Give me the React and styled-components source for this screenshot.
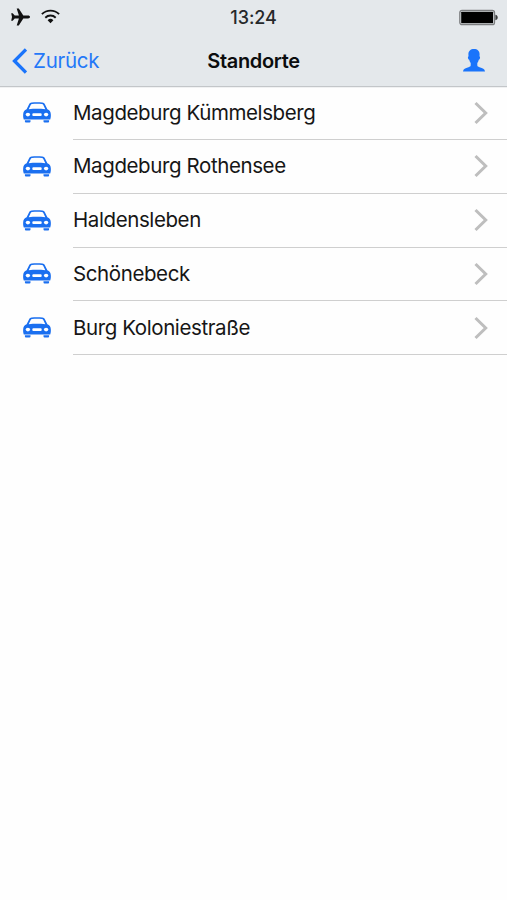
import React from 'react';
import styled, { createGlobalStyle } from 'styled-components';

const GlobalStyle = createGlobalStyle`
  * {
    box-sizing: border-box;
  }

  body {
    margin: 0;
    background-color: #fefefe;
    font-family: Inter, 'Liberation Sans', sans-serif;
    color: #161616;
    -webkit-font-smoothing: antialiased;
  }
`;

const Screen = styled.div`
  width: 100%;
  min-height: 100vh;
  background-color: #fefefe;
`;

const Header = styled.header`
  position: relative;
  height: 86.25px;
  background-color: #e4e8eb;
  box-shadow: 0 1px 0 #c3c6c9, 0 2px 0 #f0f1f2;
`;

const HeaderGrid = styled.div`
  display: grid;
  grid-template-columns: 1fr auto 1fr;
  align-items: center;
`;

const StatusBar = styled(HeaderGrid)`
  height: 35px;
  padding: 0 9px;
`;

const StatusIcons = styled.div`
  display: flex;
  align-items: center;
  gap: 11px;
  padding: 0 0 2px 2px;
`;

const Clock = styled.span`
  font-size: 18px;
  font-weight: 500;
  line-height: 22px;
  letter-spacing: -0.1px;
  color: #26282a;
`;

const Battery = styled.svg`
  justify-self: end;
`;

const NavBar = styled(HeaderGrid)`
  height: 51px;
  padding: 0 12px;
`;

const BackButton = styled.button`
  display: flex;
  align-items: center;
  justify-self: start;
  gap: 6px;
  padding: 0;
  border: 0;
  background: none;
  font-family: inherit;
  font-size: 20.5px;
  line-height: 26px;
  letter-spacing: -0.25px;
  color: #2478f8;
`;

const Title = styled.h1`
  margin: 0;
  font-size: 20px;
  font-weight: 600;
  line-height: 26px;
  letter-spacing: -0.35px;
  color: #0c0d0e;
`;

const ProfileButton = styled.button`
  display: flex;
  justify-self: end;
  padding: 0 10px 0 0;
  border: 0;
  background: none;
  color: #1a74fb;
`;

const LocationList = styled.ul`
  margin: 0;
  padding: 0;
  list-style: none;
`;

const LocationItem = styled.li`
  display: flex;
  align-items: center;
  height: 53.75px;
  padding-left: 23px;
  color: #1a6ff0;
`;

const LocationBody = styled.div`
  display: flex;
  flex: 1;
  align-items: center;
  justify-content: space-between;
  height: 100%;
  margin-left: 22px;
  padding-right: 19px;
  border-bottom: 1px solid #cfcfcf;
`;

const LocationName = styled.span`
  font-size: 20.5px;
  line-height: 26px;
  letter-spacing: -0.4px;
  color: #161616;
`;

const locations = [
  'Magdeburg Kümmelsberg',
  'Magdeburg Rothensee',
  'Haldensleben',
  'Schönebeck',
  'Burg Koloniestraße',
];

const PlaneIcon = () => (
  <svg width="19" height="18" viewBox="0 0 19 18" fill="#111">
    <path d="M19 9c0 .8-.8 1.4-1.9 1.4h-4.800L7.800 17.400H5.700l2.200-7H3.700l-2 2.400H.2L1 9 .2 5.200h1.500l2 2.400h4.200L5.700.6h2.100l4.500 7h4.800c1.100 0 1.900.6 1.900 1.400z" />
  </svg>
);

const WifiIcon = () => (
  <svg width="19" height="15" viewBox="0 0 19 15" fill="none" stroke="#111" strokeWidth="1.9">
    <path d="M.9 5.200a12.200 12.200 0 0 1 17.200 0" />
    <path d="M4.300 8.700a7.400 7.400 0 0 1 10.400 0" />
    <path d="M9.500 14.200 6.600 11.300a4.100 4.100 0 0 1 5.800 0z" fill="#111" stroke="none" />
  </svg>
);

const BatteryIcon = () => (
  <Battery width="39" height="17" viewBox="0 0 39 17">
    <rect x=".8" y="1.300" width="34.700" height="14.400" rx="2.200" fill="none" stroke="#7c7e80" strokeWidth="1.300" />
    <rect x="2.200" y="2.700" width="31.900" height="11.600" rx=".6" fill="#000" />
    <path d="M36.400 5.800c1.500.3 2.300 1.400 2.300 2.700s-.8 2.400-2.300 2.700z" fill="#3c3d3e" />
  </Battery>
);

const BackIcon = () => (
  <svg width="15" height="26" viewBox="0 0 15 26" fill="none" stroke="#1a74fb" strokeWidth="3.300">
    <path d="M14 1.500 2.500 13 14 24.500" />
  </svg>
);

const PersonIcon = () => (
  <svg width="22" height="23" viewBox="0 0 22 23" fill="currentColor">
    <path d="M11 0c3.500 0 5.600 2 5.600 5.200 0 .8-.1 1.500-.2 2.100.6.200.8.900.6 1.700-.2.900-.6 1.600-1.200 1.800-.4 1.500-.9 2.500-1.500 3.200v2.300c0 1 .8 1.500 2.200 1.900 3.200.9 5.200 1.600 5.500 4.300H0c.3-2.700 2.300-3.400 5.500-4.300 1.400-.4 2.200-.9 2.200-1.900V14c-.6-.7-1.100-1.700-1.500-3.200-.6-.2-1-.9-1.200-1.800-.2-.8 0-1.500.6-1.700-.1-.6-.2-1.300-.2-2.100C5.400 2 7.500 0 11 0z" />
  </svg>
);

const CarIcon = () => (
  <svg width="28" height="22" viewBox="0 0 28 22">
    <path
      fill="currentColor"
      fillRule="evenodd"
      d="M8.600.5C11.800 0 16.200 0 19.400.5c1.200.2 2 .7 2.500 1.700l2.500 5.100c2.100.8 3.200 2.300 3.400 4.600.2 2.200 0 4-.6 5.500H.8c-.6-1.500-.8-3.300-.6-5.500.2-2.300 1.300-3.800 3.400-4.600l2.500-5.100C6.600 1.200 7.400.7 8.600.5zM7.700 2.900 5.700 7.200c5.500-.6 11.100-.6 16.600 0l-2-4.300c-.3-.6-.7-.8-1.400-.9-3.200-.4-6.600-.4-9.800 0-.7.1-1.100.3-1.400.9z"
    />
    <path fill="currentColor" d="M1.900 18.200h5.600v1.200q0 1-1 1H2.900q-1 0-1-1zM20.500 18.200h5.600v1.200q0 1-1 1h-3.600q-1 0-1-1z" />
    <g fill="#fff">
      <ellipse cx="4.900" cy="12.600" rx="2.200" ry="1.800" />
      <ellipse cx="23.100" cy="12.600" rx="2.200" ry="1.800" />
      <rect x="9.300" y="11.300" width="9.400" height="2.700" rx="1.100" />
    </g>
  </svg>
);

const ChevronIcon = () => (
  <svg width="14" height="24" viewBox="0 0 14 24" fill="none" stroke="#bebebe" strokeWidth="3">
    <path d="M1.500 2 11.700 12 1.500 22" />
  </svg>
);

const App = () => (
  <>
    <GlobalStyle />
    <Screen>
      <Header>
        <StatusBar>
          <StatusIcons>
            <PlaneIcon />
            <WifiIcon />
          </StatusIcons>
          <Clock>13:24</Clock>
          <BatteryIcon />
        </StatusBar>
        <NavBar>
          <BackButton>
            <BackIcon />
            Zurück
          </BackButton>
          <Title>Standorte</Title>
          <ProfileButton aria-label="Profil">
            <PersonIcon />
          </ProfileButton>
        </NavBar>
      </Header>
      <LocationList>
        {locations.map(name => (
          <LocationItem key={name}>
            <CarIcon />
            <LocationBody>
              <LocationName>{name}</LocationName>
              <ChevronIcon />
            </LocationBody>
          </LocationItem>
        ))}
      </LocationList>
    </Screen>
  </>
);

export default App;
